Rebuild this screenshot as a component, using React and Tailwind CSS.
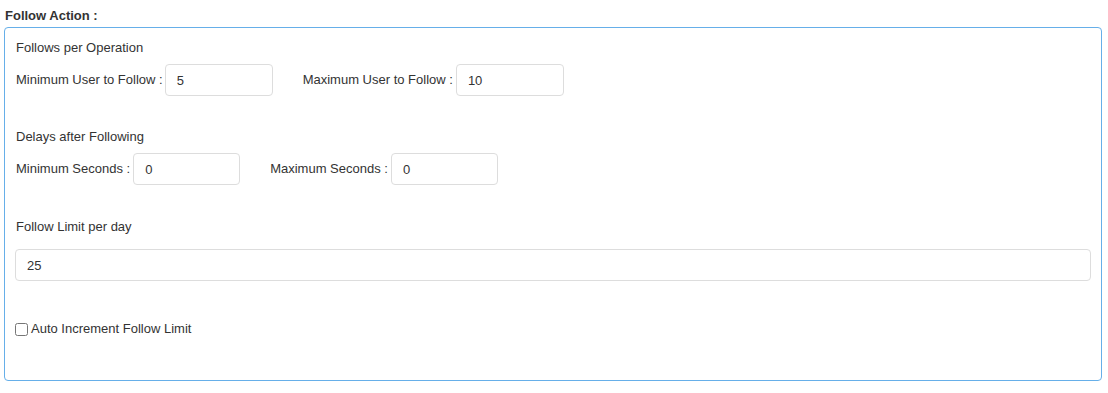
const Field = ({ value, width = "w-[108px]" }) => (
  <input
    type="text"
    defaultValue={value}
    className={`${width} h-[32px] border border-[#dddddd] rounded-[4px] px-[11px] text-[13px] text-[#333] bg-white outline-none`}
  />
);

const App = () => {
  return (
    <div
      className="w-[1108px] h-[393px] bg-white text-[#333] text-[13px]"
      style={{ fontFamily: '"Liberation Sans", Arial, sans-serif' }}
    >
      <div className="pt-[8px] pl-[5px] leading-[16px] font-bold">Follow Action :</div>

      <div className="mt-[3px] ml-[4px] mr-[6px] border border-[#66afe9] rounded-[4px] pl-[10px] pr-[10px] pb-[43px]">
        <div className="pt-[12px] pl-[1px] leading-[16px]">Follows per Operation</div>
        <div className="mt-[8px] flex items-center pl-[1px]">
          <span className="mr-[2px]">Minimum User to Follow :</span>
          <Field value="5" />
          <span className="ml-[30px] mr-[3px]">Maximum User to Follow :</span>
          <Field value="10" />
        </div>

        <div className="mt-[33px] pl-[1px] leading-[16px]">Delays after Following</div>
        <div className="mt-[8px] flex items-center pl-[1px]">
          <span className="mr-[3px]">Minimum Seconds :</span>
          <Field value="0" width="w-[107px]" />
          <span className="ml-[30px] mr-[3px]">Maximum Seconds :</span>
          <Field value="0" width="w-[107px]" />
        </div>

        <div className="mt-[34px] pl-[1px] leading-[16px]">Follow Limit per day</div>
        <div className="mt-[14px]">
          <Field value="25" width="w-full" />
        </div>

        <label className="mt-[40px] flex items-center leading-[16px]">
          <input type="checkbox" className="w-[13px] h-[13px] m-0 mr-[3px]" />
          <span>Auto Increment Follow Limit</span>
        </label>
      </div>
    </div>
  );
};

export default App;
